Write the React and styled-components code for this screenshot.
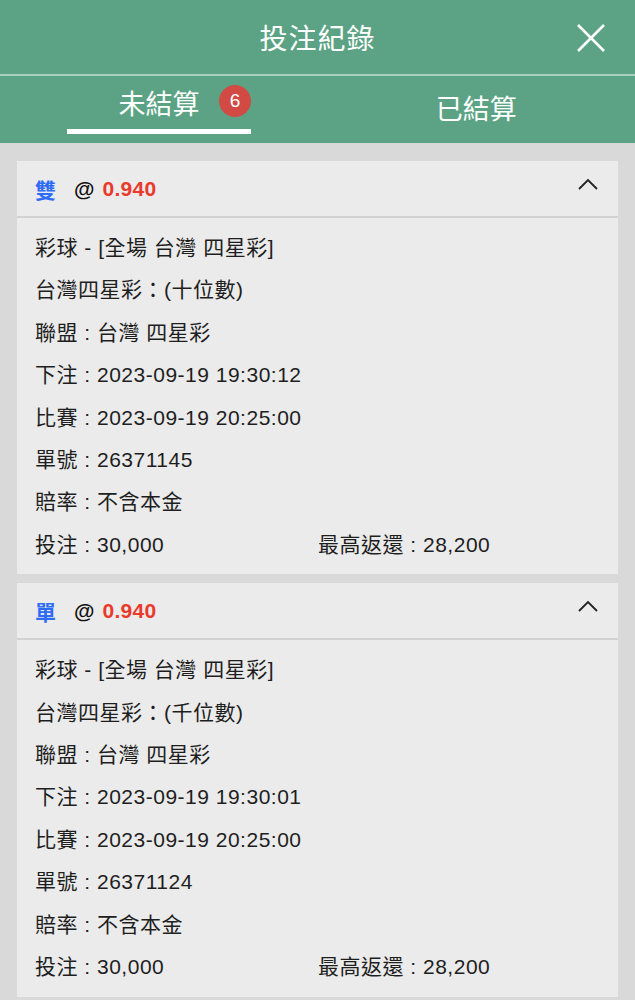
import React from "react";
import styled, { createGlobalStyle } from "styled-components";

const GlobalStyle = createGlobalStyle`
  body {
    margin: 0;
    background: #d9d9d9;
    font-family: "Liberation Sans", "Noto Sans CJK TC", sans-serif;
  }
`;

const Page = styled.div`
  width: 635px;
  min-height: 1000px;
  background: #d9d9d9;
`;

const TopBar = styled.div`
  background: #5ba384;
`;

const TitleRow = styled.div`
  height: 74px;
  display: flex;
  align-items: center;
  justify-content: center;
  position: relative;
  border-bottom: 2px solid #a9cfbf;
`;

const Title = styled.h1`
  margin: 0;
  color: #fff;
  font-size: 28px;
  font-weight: 400;
  letter-spacing: 1px;
`;

const CloseButton = styled.button`
  position: absolute;
  right: 28px;
  top: 22px;
  width: 32px;
  height: 32px;
  padding: 0;
  border: none;
  background: none;
`;

const Tabs = styled.div`
  height: 67px;
  display: flex;
`;

const Tab = styled.div`
  flex: 0 0 50%;
  box-sizing: border-box;
  display: flex;
  justify-content: ${(p) => (p.$left ? "flex-start" : "center")};
  padding-left: ${(p) => (p.$left ? "67px" : "0")};
`;

const TabInner = styled.div`
  position: relative;
  width: ${(p) => (p.$active ? "184px" : "auto")};
  display: flex;
  justify-content: center;
  padding-top: ${(p) => (p.$active ? "12px" : "17px")};
  border-bottom: ${(p) => (p.$active ? "5px solid #fff" : "none")};
  height: ${(p) => (p.$active ? "41px" : "auto")};
  box-sizing: content-box;
`;

const TabLabel = styled.span`
  color: #fff;
  font-size: 27px;
  line-height: 34px;
`;

const Badge = styled.span`
  position: absolute;
  left: 152px;
  top: 9px;
  width: 32px;
  height: 32px;
  border-radius: 50%;
  background: #d14a43;
  color: #fff;
  font-size: 19px;
  display: flex;
  align-items: center;
  justify-content: center;
`;

const List = styled.div`
  padding: 18px 17px 0;
  display: flex;
  flex-direction: column;
  gap: 9px;
`;

const Card = styled.div`
  background: #ebebeb;
`;

const CardHead = styled.div`
  height: 55px;
  padding: 0 20px 0 18px;
  display: flex;
  align-items: center;
  border-bottom: 2px solid #d2d2d2;
  font-weight: 700;
  font-size: 21px;
`;

const Pick = styled.span`
  color: #2f6cf6;
  margin-right: 18px;
`;

const At = styled.span`
  color: #111;
  margin-right: 8px;
`;

const Odds = styled.span`
  color: #e93a2c;
  letter-spacing: 0.3px;
`;

const Chevron = styled.svg`
  margin-left: auto;
  margin-top: -10px;
`;

const CardBody = styled.div`
  padding: 9px 18px 8px;
  color: #1e1e1e;
  font-size: 21px;
  letter-spacing: 0.5px;
`;

const Line = styled.div`
  line-height: 42.4px;
  display: flex;
`;

const Half = styled.span`
  width: 283px;
`;

const bets = [
  { pick: "雙", digit: "十位數", placed: "19:30:12", id: "26371145" },
  { pick: "單", digit: "千位數", placed: "19:30:01", id: "26371124" },
];

const BetCard = ({ bet }) => (
  <Card>
    <CardHead>
      <Pick>{bet.pick}</Pick>
      <At>@</At>
      <Odds>0.940</Odds>
      <Chevron width="20" height="12" viewBox="0 0 20 12">
        <path d="M1 11 L10 2 L19 11" fill="none" stroke="#222" strokeWidth="1.8" />
      </Chevron>
    </CardHead>
    <CardBody>
      <Line>彩球 - [全場 台灣 四星彩]</Line>
      <Line>台灣四星彩：({bet.digit})</Line>
      <Line>聯盟 : 台灣 四星彩</Line>
      <Line>下注 : 2023-09-19 {bet.placed}</Line>
      <Line>比賽 : 2023-09-19 20:25:00</Line>
      <Line>單號 : {bet.id}</Line>
      <Line>賠率 : 不含本金</Line>
      <Line>
        <Half>投注 : 30,000</Half>
        <span>最高返還 : 28,200</span>
      </Line>
    </CardBody>
  </Card>
);

export default function App() {
  return (
    <Page>
      <GlobalStyle />
      <TopBar>
        <TitleRow>
          <Title>投注紀錄</Title>
          <CloseButton>
            <svg width="32" height="32" viewBox="0 0 32 32">
              <path d="M3 3 L29 29 M29 3 L3 29" stroke="#fff" strokeWidth="2.6" />
            </svg>
          </CloseButton>
        </TitleRow>
        <Tabs>
          <Tab $left>
            <TabInner $active>
              <TabLabel>未結算</TabLabel>
              <Badge>6</Badge>
            </TabInner>
          </Tab>
          <Tab>
            <TabInner>
              <TabLabel>已結算</TabLabel>
            </TabInner>
          </Tab>
        </Tabs>
      </TopBar>
      <List>
        {bets.map((b) => (
          <BetCard key={b.id} bet={b} />
        ))}
      </List>
    </Page>
  );
}
